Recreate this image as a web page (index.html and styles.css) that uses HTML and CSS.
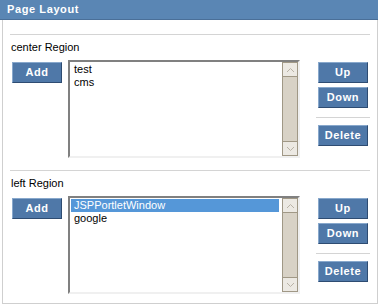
FILE: index.html
```html
<!DOCTYPE html>
<html>
<head>
<meta charset="utf-8">
<link rel="stylesheet" href="styles.css">
</head>
<body>
<div class="panel">
  <div class="header">Page Layout</div>
  <div class="content">
    <div class="section">
      <div class="rule"></div>
      <div class="label">center Region</div>
      <div class="row">
        <button class="btn add">Add</button>
        <div class="listbox">
          <div class="items">
            <div class="item">test</div>
            <div class="item">cms</div>
          </div>
          <div class="scroll">
            <div class="arrow"><svg width="9" height="6" viewBox="0 0 9 6"><path d="M1 5 L4.5 1.5 L8 5" fill="none" stroke="#b8b2a6" stroke-width="1"/></svg></div>
            <div class="track"></div>
            <div class="arrow"><svg width="9" height="6" viewBox="0 0 9 6"><path d="M1 1 L4.5 4.5 L8 1" fill="none" stroke="#b8b2a6" stroke-width="1"/></svg></div>
          </div>
        </div>
        <div class="actions">
          <button class="btn">Up</button>
          <button class="btn">Down</button>
          <div class="mini-rule"></div>
          <button class="btn">Delete</button>
        </div>
      </div>
    </div>
    <div class="section">
      <div class="rule"></div>
      <div class="label">left Region</div>
      <div class="row">
        <button class="btn add">Add</button>
        <div class="listbox">
          <div class="items">
            <div class="item selected">JSPPortletWindow</div>
            <div class="item">google</div>
          </div>
          <div class="scroll">
            <div class="arrow"><svg width="9" height="6" viewBox="0 0 9 6"><path d="M1 5 L4.5 1.5 L8 5" fill="none" stroke="#b8b2a6" stroke-width="1"/></svg></div>
            <div class="track"></div>
            <div class="arrow"><svg width="9" height="6" viewBox="0 0 9 6"><path d="M1 1 L4.5 4.5 L8 1" fill="none" stroke="#b8b2a6" stroke-width="1"/></svg></div>
          </div>
        </div>
        <div class="actions">
          <button class="btn">Up</button>
          <button class="btn">Down</button>
          <div class="mini-rule"></div>
          <button class="btn">Delete</button>
        </div>
      </div>
    </div>
  </div>
</div>
</body>
</html>
```
FILE: styles.css
```css
html, body {
  margin: 0;
  padding: 0;
  background: #ffffff;
}
body {
  font-family: "Liberation Sans", Arial, sans-serif;
  font-size: 11px;
  color: #000;
}
.panel {
  width: 378px;
}
.header {
  height: 19px;
  line-height: 19px;
  background: #5a86b4;
  border-bottom: 1px solid #4a6f98;
  color: #ffffff;
  font-weight: bold;
  font-size: 11px;
  letter-spacing: 0.6px;
  padding-left: 7px;
}
.content {
  margin-left: 2px;
  border: 1px solid #cfcfcf;
  border-top: none;
  padding: 0 7px 9px 7px;
}
.section {
  display: flex;
  flex-direction: column;
}
.rule {
  height: 1px;
  background: #d4d4d4;
  margin-top: 14px;
}
.section + .section .rule {
  margin-top: 12px;
}
.label {
  height: 13px;
  line-height: 13px;
  margin-top: 6px;
  padding-left: 1px;
}
.row {
  display: flex;
  align-items: flex-start;
  margin-top: 6px;
}
.btn {
  width: 50px;
  height: 21px;
  padding: 0;
  margin: 0;
  background: #4f78a8;
  border: 1px solid;
  border-color: #88a8cc #2e4c72 #2e4c72 #88a8cc;
  color: #ffffff;
  font-family: "Liberation Sans", Arial, sans-serif;
  font-weight: bold;
  font-size: 11px;
  letter-spacing: 0.6px;
  line-height: 19px;
}
.add {
  margin-left: 2px;
  margin-top: 2px;
}
.listbox {
  margin-left: 6px;
  width: 228px;
  height: 94px;
  display: flex;
  border: 2px solid;
  border-color: #808080 #f0f0f0 #f0f0f0 #808080;
  background: #fff;
}
.items {
  flex: 1;
  padding: 1px 3px 0 1px;
}
.item {
  height: 13px;
  line-height: 13px;
  padding-left: 3px;
  white-space: nowrap;
}
.item.selected {
  background: #5597d8;
  color: #ffffff;
}
.scroll {
  width: 16px;
  display: flex;
  flex-direction: column;
  background: #d8d2c6;
}
.arrow {
  border: 1px solid #a09886;
  background: #ece9e3;
  display: flex;
  align-items: center;
  justify-content: center;
  box-sizing: border-box;
  height: 15px;
}
.track {
  flex: 1;
  border-left: 1px solid #a09886;
  border-right: 1px solid #a09886;
}
.actions {
  margin-left: 18px;
  margin-top: 2px;
  display: flex;
  flex-direction: column;
  align-items: flex-start;
  gap: 4px;
}
.mini-rule {
  width: 54px;
  height: 1px;
  background: #d4d4d4;
  margin: 5px 0 3px -2px;
}
```
